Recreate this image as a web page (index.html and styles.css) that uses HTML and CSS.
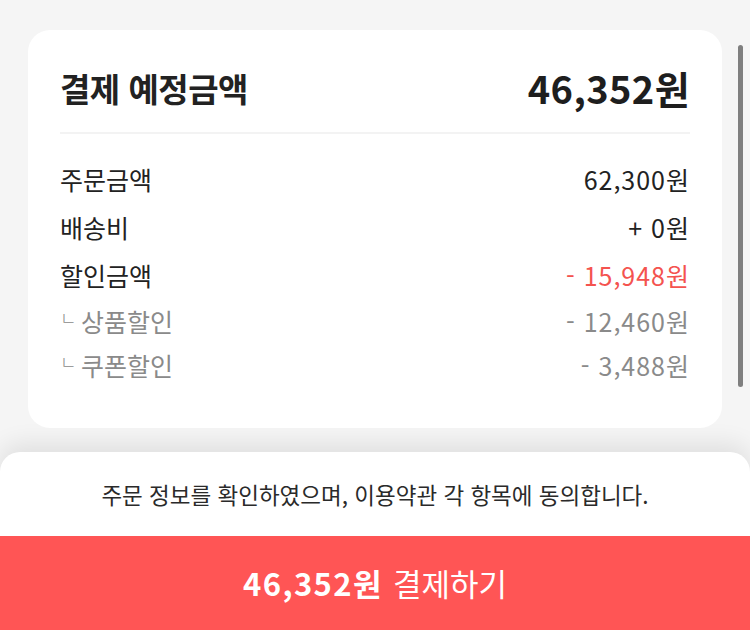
FILE: index.html
```html
<!DOCTYPE html>
<html lang="ko">
<head>
<meta charset="utf-8">
<title>결제</title>
<link rel="stylesheet" href="styles.css">
</head>
<body>
<div class="page">
  <main class="content">
    <section class="card">
      <div class="card-head">
        <h2 class="title">결제 예정금액</h2>
        <span class="total">46,352원</span>
      </div>
      <ul class="rows">
        <li class="row"><span>주문금액</span><span class="num">62,300원</span></li>
        <li class="row"><span>배송비</span><span class="num">+ 0원</span></li>
        <li class="row"><span>할인금액</span><span class="num red">- 15,948원</span></li>
        <li class="row sub"><span><span class="branch">ㄴ</span>상품할인</span><span class="num">- 12,460원</span></li>
        <li class="row sub"><span><span class="branch">ㄴ</span>쿠폰할인</span><span class="num">- 3,488원</span></li>
      </ul>
    </section>
    <div class="scrollbar"></div>
  </main>
  <footer class="sheet">
    <p class="notice">주문 정보를 확인하였으며, 이용약관 각 항목에 동의합니다.</p>
    <button class="pay"><b>46,352원</b> 결제하기</button>
  </footer>
</div>
</body>
</html>
```

FILE: styles.css
```css
* { box-sizing: border-box; }

html, body {
  margin: 0;
  padding: 0;
}

body {
  background: #f5f5f5;
  font-family: "Noto Sans CJK KR", "Noto Sans", sans-serif;
  color: #222;
}

.page {
  height: 630px;
  display: flex;
  flex-direction: column;
  overflow: hidden;
}

.content {
  position: relative;
  flex: 1;
  padding: 30px 28px 0;
}

.card {
  background: #fff;
  border-radius: 22px;
  padding: 0 32px 41px;
}

.card-head {
  display: flex;
  justify-content: space-between;
  align-items: center;
  padding: 38px 0 24px;
  border-bottom: 2px solid #f3f3f3;
}

.title {
  margin: 0;
  font-size: 33px;
  line-height: 40px;
  font-weight: 700;
  color: #222;
  letter-spacing: -0.5px;
}

.total {
  font-size: 38px;
  line-height: 40px;
  font-weight: 700;
  color: #1e1e1e;
  letter-spacing: 0.4px;
}

.rows {
  list-style: none;
  margin: 0;
  padding: 21px 0 0;
}

.row {
  display: flex;
  justify-content: space-between;
  align-items: center;
  height: 48px;
  font-size: 25px;
  color: #222;
}

.num { letter-spacing: 1px; }

.row .red { color: #f4534f; }

.row.sub {
  height: 44px;
  color: #8a8a8a;
}

.branch {
  display: inline-block;
  font-size: 18px;
  font-weight: 300;
  width: 21px;
  vertical-align: 7px;
}

.scrollbar {
  position: absolute;
  top: 45px;
  left: 738px;
  width: 5px;
  height: 342px;
  border-radius: 3px;
  background: #7f7f7f;
}

.sheet {
  background: #fff;
  border-radius: 20px 20px 0 0;
  box-shadow: 0 -8px 24px rgba(0, 0, 0, 0.09);
  overflow: hidden;
}

.notice {
  margin: 0;
  height: 84px;
  display: flex;
  align-items: center;
  justify-content: center;
  font-size: 22.5px;
  color: #2a2a2a;
}

.pay {
  display: flex;
  align-items: center;
  justify-content: center;
  gap: 10px;
  width: 100%;
  height: 94px;
  border: 0;
  background: #ff5555;
  color: #fff;
  font-family: inherit;
  font-size: 31px;
  font-weight: 400;
  padding: 0 0 2px;
}

.pay b {
  font-weight: 700;
  letter-spacing: 1.4px;
}
```
